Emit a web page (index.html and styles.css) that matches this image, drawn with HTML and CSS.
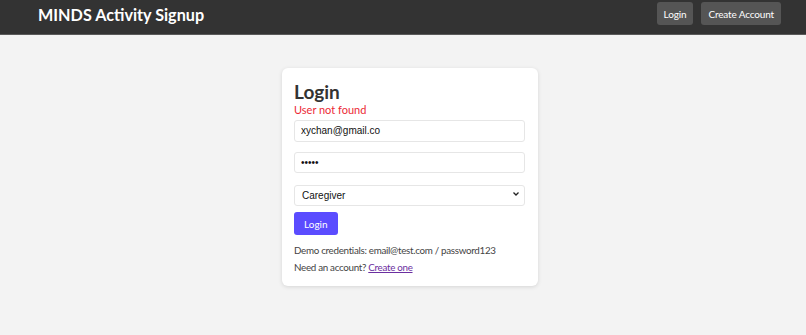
FILE: index.html
```html
<!DOCTYPE html>
<html>
<head>
<meta charset="utf-8">
<link rel="stylesheet" href="styles.css">
</head>
<body>
<header class="topbar">
  <div class="brand">MINDS Activity Signup</div>
  <nav class="nav">
    <button class="nav-btn">Login</button>
    <button class="nav-btn">Create Account</button>
  </nav>
</header>
<main class="main">
  <section class="card">
    <h2 class="title">Login</h2>
    <div class="error">User not found</div>
    <input class="field" type="text" value="xychan@gmail.co">
    <input class="field" type="password" value="abcde">
    <div class="select-wrap">
      <select class="field select">
        <option>Caregiver</option>
      </select>
      <svg class="chev" width="8" height="6" viewBox="0 0 8 6"><path d="M1.5 1.5 L4 4 L6.5 1.5" fill="none" stroke="#222" stroke-width="1.3"/></svg>
    </div>
    <button class="submit">Login</button>
    <p class="note">Demo credentials: email@test.com / password123</p>
    <p class="note">Need an account? <a href="#" class="link">Create one</a></p>
  </section>
</main>
</body>
</html>
```
FILE: styles.css
```css
* { box-sizing: border-box; }
html, body { margin: 0; padding: 0; }
body {
  background: #f3f3f3;
  font-family: Lato, "Noto Sans", sans-serif;
  color: #333;
  height: 335px;
}
.topbar {
  height: 35px;
  background: #333333;
  border-bottom: 1px solid #5a5a5a;
  display: flex;
  align-items: center;
  justify-content: space-between;
  padding: 0 25px 0 38px;
}
.brand {
  color: #fff;
  font-weight: 700;
  font-size: 16.2px;
  margin-top: -5px;
}
.nav { display: flex; gap: 8px; margin-top: -7px; }
.nav-btn {
  background: #555;
  color: #fff;
  border: none;
  border-radius: 3px;
  font-family: inherit;
  font-size: 10px;
  letter-spacing: -0.15px;
  height: 23px;
  padding: 0 7px;
}
.main {
  display: flex;
  justify-content: center;
  padding-top: 33px;
  padding-left: 14px;
}
.card {
  width: 256px;
  background: #fff;
  border-radius: 6px;
  box-shadow: 0 1px 4px rgba(0,0,0,0.12);
  padding: 12px 13px 8px 12px;
  display: flex;
  flex-direction: column;
  align-items: flex-start;
}
.title {
  margin: 0;
  font-size: 19px;
  font-weight: 700;
  line-height: 23px;
}
.error {
  color: #ec2a35;
  font-size: 11px;
  line-height: 14px;
  margin-bottom: 3px;
}
.field {
  width: 100%;
  height: 21.5px;
  border: 1px solid #e6e6e6;
  border-radius: 3px;
  font-family: "Liberation Sans", Arial, sans-serif;
  font-size: 10px;
  padding: 0 6px;
  margin-bottom: 10px;
  background: #fff;
  color: #111;
  outline: none;
}
.select-wrap { position: relative; width: 100%; }
.select {
  -webkit-appearance: none;
  appearance: none;
  margin-bottom: 6px;
  padding-left: 7px;
}
.chev { position: absolute; right: 5px; top: 8px; }
.submit {
  background: #5b4cff;
  color: #fff;
  border: none;
  border-radius: 3px;
  font-family: inherit;
  font-size: 10px;
  height: 23px;
  padding: 0 10px;
  margin-bottom: 9px;
}
.note {
  margin: 0 0 4px 0;
  font-size: 9.8px;
  letter-spacing: -0.3px;
  line-height: 13px;
  color: #444;
  white-space: nowrap;
}
.link { color: #6b2fa0; }
```
